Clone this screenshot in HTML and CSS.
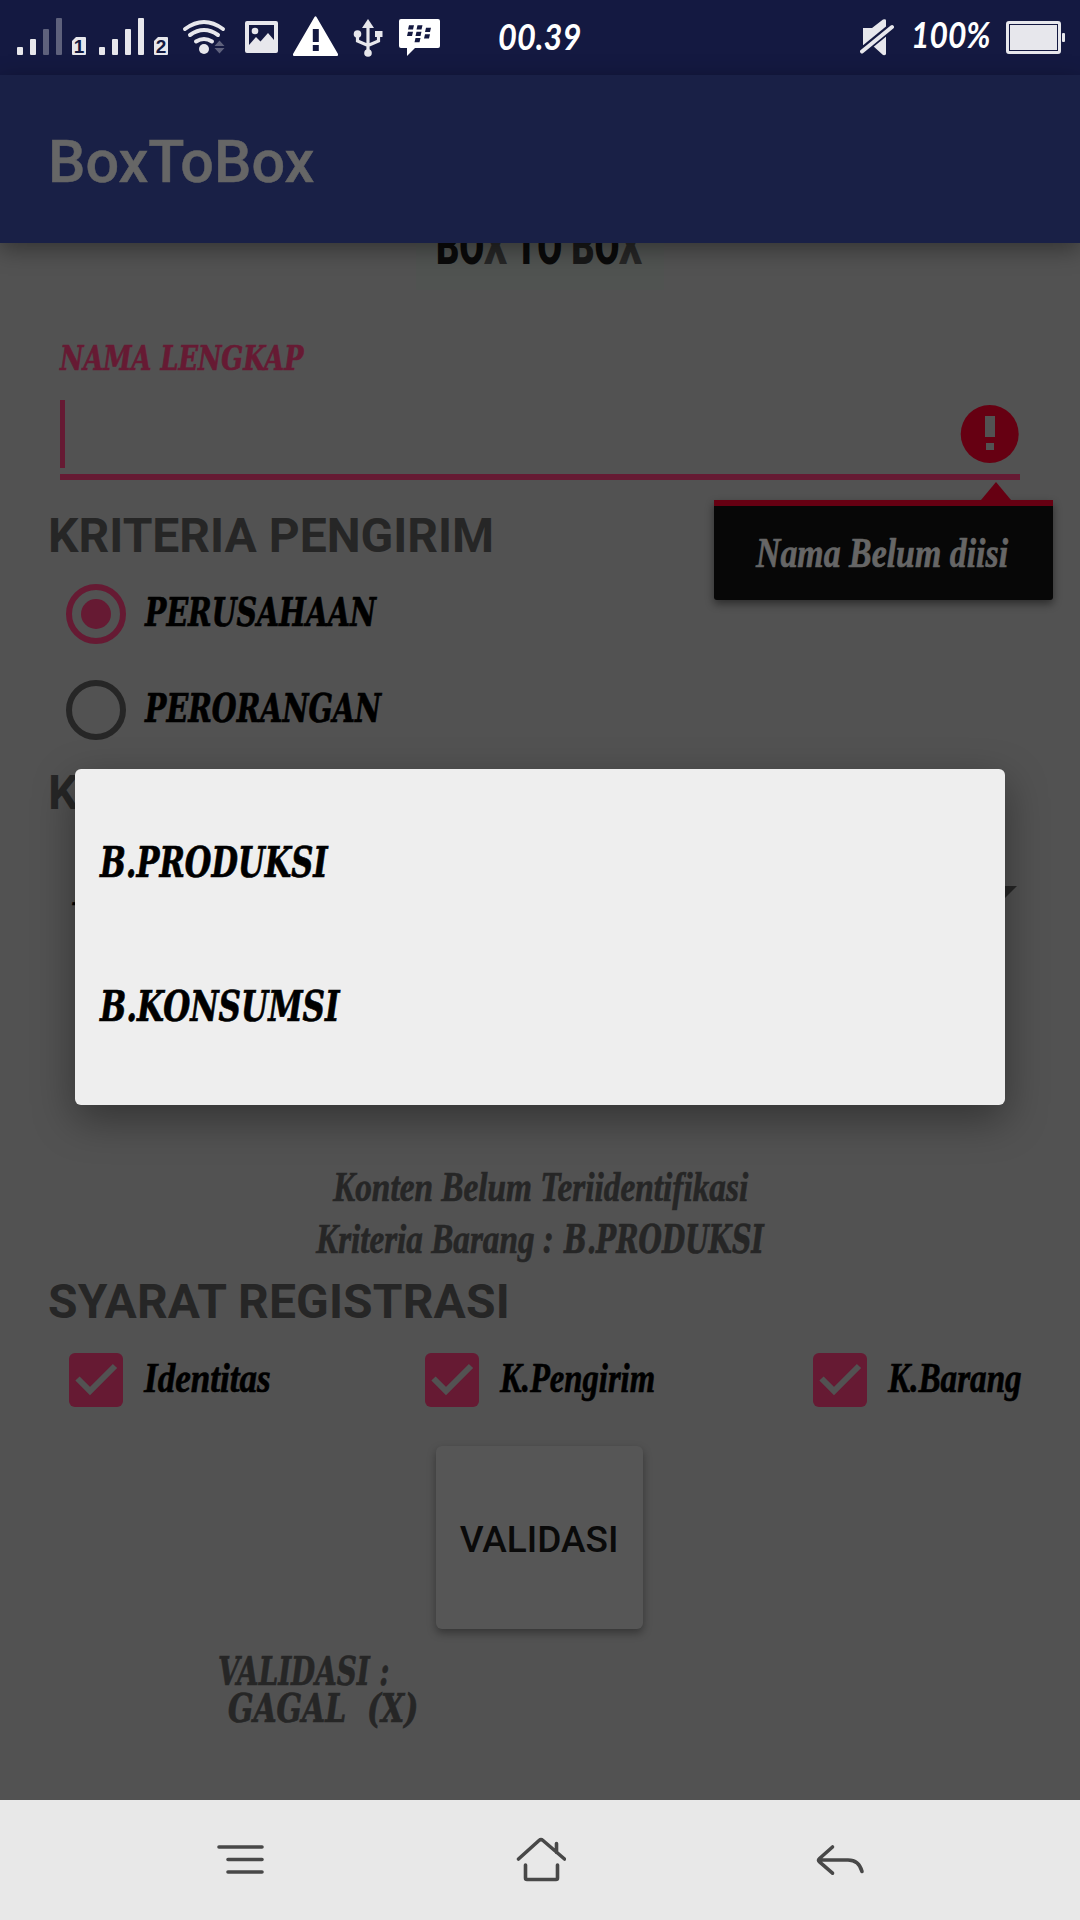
FILE: index.html
```html
<!DOCTYPE html>
<html lang="id">
<head>
<meta charset="utf-8">
<title>BoxToBox</title>
<link rel="stylesheet" href="styles.css">
</head>
<body>
<div class="screen">
  <header class="status">
    <svg class="status-icons" width="460" height="75" viewBox="0 0 460 75" fill="#e7e7ec">
      <!-- signal, SIM 1 -->
      <g>
        <rect x="17" y="47" width="6" height="8" rx="1"/>
        <rect x="30" y="39" width="6" height="16" rx="1"/>
        <rect x="43" y="29" width="6" height="26" rx="1" opacity=".35"/>
        <rect x="56" y="18" width="6" height="37" rx="1" opacity=".35"/>
        <path d="M76 37h9a1 1 0 0 1 1 1v16a1 1 0 0 1-1 1H73a1 1 0 0 1-1-1V41z"/>
      </g>
      <!-- signal, SIM 2 -->
      <g>
        <rect x="99" y="47" width="6" height="8" rx="1"/>
        <rect x="112" y="39" width="6" height="16" rx="1"/>
        <rect x="125" y="29" width="6" height="26" rx="1"/>
        <rect x="138" y="18" width="6" height="37" rx="1"/>
        <path d="M158 37h9a1 1 0 0 1 1 1v16a1 1 0 0 1-1 1h-12a1 1 0 0 1-1-1V41z"/>
      </g>
      <g class="sim" fill="#141941" text-anchor="middle"><text x="79" y="53">1</text><text x="161" y="53">2</text></g>
      <!-- wifi -->
      <g fill="none" stroke="#e7e7ec" stroke-width="4" stroke-linecap="round">
        <path d="M185 29q19-14 38 0M190 35q14-10 28 0M196 41.500q8-5 16 0"/>
      </g>
      <circle cx="204" cy="49" r="5"/>
      <path d="M214.500 46l5-5.500 5 5.500zM214.500 48l5 5.500 5-5.500z" opacity=".35"/>
      <!-- picture -->
      <path fill-rule="evenodd" d="M247 21h29a2 2 0 0 1 2 2v28a2 2 0 0 1-2 2h-29a2 2 0 0 1-2-2V23a2 2 0 0 1 2-2zM249 25v20l7-8 4.500 4.500L268 33l6 7V25z"/>
      <circle cx="255" cy="31" r="3.300"/>
      <!-- warning -->
      <path fill="#fff" fill-rule="evenodd" d="M314.500 17q1-1.500 2 0L338 54q.5 2-1 2H294q-1.500 0-1-2zM312.800 29v13h6V29zM312.800 45v6h6v-6z"/>
      <!-- usb -->
      <path d="M368 19l6 9h-12z"/>
      <circle cx="357.500" cy="34" r="3.800"/><circle cx="368" cy="53" r="3.800"/><rect x="375" y="31" width="7.500" height="6"/>
      <path d="M368 26v27M357.500 34v7l10.500 4.500L378.500 41v-7" fill="none" stroke="#e7e7ec" stroke-width="3.200"/>
      <!-- messenger -->
      <path fill="#fff" d="M401 19h37a2 2 0 0 1 2 2v25a2 2 0 0 1-2 2h-23l-8 8v-8h-6a2 2 0 0 1-2-2V21a2 2 0 0 1 2-2z"/>
      <g fill="#141941">
        <path d="M409 25.200h5l-1 4.300h-5zM417.500 25.200h5l-1 4.300h-5zM408 31.700h5l-1 4.300h-5zM416.500 31.700h5l-1 4.300h-5zM426 27.700h5l-1 4.300h-5zM425 34.200h5l-1 4.300h-5zM415.500 38h5l-1 4.300h-5z"/>
      </g>
    </svg>
    <span class="num clock">00.39</span>
    <svg class="mute" width="36" height="75" viewBox="0 0 36 75">
      <path d="M3 28h9l11-8.500q3-1 3 1V54q0 1.500-3 1L12 45H3z" fill="#e7e7ec"/>
      <path d="M1 52L34 25" stroke="#141941" stroke-width="8"/>
      <path d="M2 51.500L32 27" stroke="#e7e7ec" stroke-width="4" stroke-linecap="round"/>
    </svg>
    <span class="num percent">100%</span>
    <svg class="battery" width="60" height="75" viewBox="0 0 60 75">
      <rect x="1.500" y="22.500" width="52" height="30" rx="1.500" fill="none" stroke="#e7e7ec" stroke-width="3"/>
      <rect x="4" y="25" width="47" height="25" fill="#e7e7ec"/>
      <rect x="56" y="33" width="3" height="9" rx="1" fill="#e7e7ec"/>
    </svg>
  </header>

  <header class="appbar"><h1 class="fit app-title">BoxToBox</h1></header>

  <main class="content">
    <div class="logo"><span class="fit logo-text">BO<i>X</i> TO <b>B</b>O<i>X</i></span></div>

    <label class="field-label"><span class="fit caps name">NAMA LENGKAP</span></label>
    <div class="field">
      <span class="cursor"></span>
      <svg class="error" width="60" height="60" viewBox="0 0 60 60">
        <circle cx="29.700" cy="30" r="29" fill="#660012"/>
        <path d="M25 12h10v21H25zM26 39h8v7h-8z" fill="#525252"/>
      </svg>
    </div>

    <h2>KRITERIA PENGIRIM</h2>
    <div class="radio">
      <svg width="60" height="62" viewBox="0 0 60 62"><circle cx="30" cy="31" r="27" fill="none" stroke="#661a33" stroke-width="6"/><circle cx="30" cy="31" r="15" fill="#661a33"/></svg>
      <span class="fit caps perusahaan">PERUSAHAAN</span>
    </div>
    <div class="radio">
      <svg width="60" height="62" viewBox="0 0 60 62"><circle cx="30" cy="31" r="27" fill="none" stroke="#262626" stroke-width="6"/></svg>
      <span class="fit caps perorangan">PERORANGAN</span>
    </div>

    <h2 class="goods">KRITERIA BARANG</h2>
    <div class="spinner">
      <span class="fit caps selected">B.PRODUKSI</span>
      <svg width="30" height="15" viewBox="0 0 30 15"><path d="M0 0h30L15 15z" fill="#262626"/></svg>
    </div>

    <div class="info"><span class="fit script konten">Konten Belum Teriidentifikasi</span></div>
    <div class="info"><span class="fit script kriteria">Kriteria Barang :</span><span class="fit caps barang">B.PRODUKSI</span></div>

    <h2 class="terms">SYARAT REGISTRASI</h2>
    <div class="checks">
      <div class="check">
        <svg width="54" height="54" viewBox="0 0 54 54"><rect width="54" height="54" rx="6" fill="#661a33"/><path d="M8.500 25.500L21 38 46 13" fill="none" stroke="#525252" stroke-width="6"/></svg>
        <span class="fit script identitas">Identitas</span>
      </div>
      <div class="check second">
        <svg width="54" height="54" viewBox="0 0 54 54"><rect width="54" height="54" rx="6" fill="#661a33"/><path d="M8.500 25.500L21 38 46 13" fill="none" stroke="#525252" stroke-width="6"/></svg>
        <span class="fit script pengirim">K.Pengirim</span>
      </div>
      <div class="check">
        <svg width="54" height="54" viewBox="0 0 54 54"><rect width="54" height="54" rx="6" fill="#661a33"/><path d="M8.500 25.500L21 38 46 13" fill="none" stroke="#525252" stroke-width="6"/></svg>
        <span class="fit script kbarang">K.Barang</span>
      </div>
    </div>

    <button class="validate">VALIDASI</button>
    <div class="result">
      <span class="fit caps res1">VALIDASI :</span>
      <span class="fit caps res2">GAGAL&nbsp; (X)</span>
    </div>

    <div class="tooltip"><span class="fit script tip">Nama Belum diisi</span></div>
  </main>

  <nav class="navbar">
    <svg width="50" height="60" viewBox="0 0 50 60"><path d="M3 17h43M12 29.500h34M12 42h34"/></svg>
    <svg width="50" height="60" viewBox="0 0 50 60"><path d="M2.500 29L23 10.500q2-1.700 4 0L48.500 29M40.500 13.500v9M9.500 35v13q0 1.500 1.500 1.500h29q1.500 0 1.500-1.500V35"/></svg>
    <svg width="50" height="60" viewBox="0 0 50 60"><path d="M17.500 17L4.500 28.500q-2 1.700 0 3.400l13 11.300M5 30h28q11 0 14 11.500"/></svg>
  </nav>

  <div class="dialog">
    <div class="option"><span class="fit caps opt1">B.PRODUKSI</span></div>
    <div class="option"><span class="fit caps opt2">B.KONSUMSI</span></div>
  </div>
</div>
</body>
</html>
```
FILE: styles.css
```css
body { margin: 0; }
* { box-sizing: border-box; }

.screen {
  position: relative;
  display: flex;
  flex-direction: column;
  width: 1080px;
  height: 1920px;
  overflow: hidden;
  background: #525252;
  font-family: Roboto, sans-serif;
}

/* condensed text: the box has the drawn width, the glyphs are squeezed into it */
.fit {
  display: block;
  flex: none;
  white-space: nowrap;
  transform: scaleX(var(--sx, 1));
  transform-origin: 0 50%;
}
.caps {
  font-family: "DejaVu Serif Condensed", "DejaVu Serif", serif;
  font-stretch: condensed;
  font-weight: 700;
  font-style: italic;
  font-size: 39px;
  -webkit-text-stroke: .7px;
}
.script {
  font-family: "Liberation Serif", serif;
  font-weight: 700;
  font-style: italic;
  font-size: 42px;
  -webkit-text-stroke: .7px;
}

/* status bar */
.status {
  display: flex;
  flex: none;
  height: 75px;
  background: #141941;
  line-height: 72px;
}
.status svg { display: block; flex: none; }
.num {
  flex: none;
  font-family: Lato, sans-serif;
  font-weight: 700;
  font-style: italic;
  font-size: 37px;
  color: #fff;
  white-space: nowrap;
  transform-origin: 0 50%;
}
.clock { width: 84px; margin-left: 38px; transform: scaleX(.88); }
.mute { margin-left: 278px; }
.percent { width: 78px; margin-left: 15px; line-height: 67px; transform: scaleX(.86); }
.battery { margin-left: 17px; }
.sim { font: 700 19px "Liberation Sans", sans-serif; }

/* app bar */
.appbar {
  display: flex;
  flex: none;
  z-index: 1;
  height: 168px;
  padding-left: 48px;
  background: #192046;
  box-shadow: 0 6px 22px rgba(0, 0, 0, .38);
}
.app-title {
  --sx: .988;
  margin: 0;
  font-size: 60px;
  font-weight: 500;
  line-height: 173px;
  color: #666;
  -webkit-text-stroke: .5px;
}

.content {
  position: relative;
  display: flex;
  flex-direction: column;
  flex: none;
  height: 1557px;
  padding: 0 48px;
  color: #262626;
}
.logo {
  align-self: center;
  width: 248px;
  height: 47px;
  padding-left: 20px;
  overflow: hidden;
  background: #505351;
}
.logo-text {
  --sx: .695;
  width: 205px;
  margin-top: -29px;
  font-size: 52px;
  font-weight: 900;
  line-height: 66px;
  color: #0a0a0a;
}
.logo-text i { font-style: normal; color: #262626; }
.logo-text b { font-weight: 900; color: #181818; }

.field-label {
  margin: 48px 0 0 12px;
  line-height: 40px;
  color: #661a33;
}
.name { --sx: .837; width: 245px; font-size: 34px; }
.field {
  display: flex;
  justify-content: space-between;
  height: 80px;
  margin: 22px 12px 0;
  border-bottom: 6px solid #661a33;
}
.cursor { width: 5px; height: 68px; background: #661a33; }
.error { margin-top: 4px; }

h2 {
  margin: 28px 0 2px;
  font-size: 48px;
  font-weight: 700;
  line-height: 56px;
  white-space: nowrap;
}
.radio {
  display: flex;
  align-items: center;
  gap: 19px;
  height: 96px;
  padding-left: 18px;
}
.radio .fit { margin-bottom: 5px; color: #000; line-height: 50px; }
.perusahaan { --sx: .81; width: 231px; }
.perorangan { --sx: .812; width: 236px; }

.goods { margin-top: 7px; }
.spinner {
  display: flex;
  justify-content: space-between;
  height: 88px;
  margin: 26px 15px 0 25px;
  line-height: 84px;
}
.spinner svg { margin-top: 37px; }
.selected { --sx: .8; width: 230px; color: #000; }

.info {
  display: flex;
  flex: none;
  justify-content: center;
  gap: 10px;
  line-height: 52px;
}
.spinner + .info { margin-top: 224px; }
.konten { --sx: .793; width: 415px; }
.kriteria { --sx: .79; width: 238px; }
.barang { --sx: .765; width: 200px; }

.terms { margin-top: 9px; letter-spacing: .15px; }
.checks {
  display: flex;
  justify-content: space-between;
  height: 96px;
  padding: 0 10px 0 21px;
}
.check { display: flex; align-items: center; gap: 21px; }
.check .fit { margin-bottom: 4px; color: #000; line-height: 50px; }
.check.second { margin-right: 4px; }
.identitas { --sx: .835; width: 127px; }
.pengirim { --sx: .777; width: 155px; }
.kbarang { --sx: .79; width: 134px; }
.checks svg { flex: none; }

.validate {
  align-self: center;
  flex: none;
  width: 207px;
  height: 183px;
  margin: 18px 2px 0 0;
  padding: 4px 0 0;
  border: 0;
  border-radius: 6px;
  background: #565656;
  box-shadow: 0 4px 8px rgba(0, 0, 0, .35);
  font: 500 37px/44px Roboto, sans-serif;
  color: #0a0a0a;
}
.result {
  padding-left: 170px;
  margin-top: 24px;
  line-height: 37px;
}
.res1 { --sx: .79; width: 171px; }
.res2 { --sx: .85; width: 190px; margin-left: 10px; }

/* validation message hanging below the field */
.tooltip {
  position: absolute;
  top: 257px;
  left: 714px;
  width: 339px;
  height: 100px;
  padding-left: 42px;
  border-top: 6px solid #660012;
  border-radius: 0 0 3px 3px;
  background: #070707;
  box-shadow: 0 4px 9px rgba(0, 0, 0, .45);
  line-height: 95px;
  color: #666;
}
.tooltip::before {
  content: "";
  position: absolute;
  top: -24px;
  left: 267px;
  border: 15px solid transparent;
  border-top-width: 0;
  border-bottom: 18px solid #660012;
}
.tip { --sx: .806; width: 252px; }

.navbar {
  display: flex;
  flex: none;
  justify-content: space-between;
  height: 120px;
  padding: 30px 215px 0 216px;
  background: #e8e8e8;
}
.navbar svg {
  fill: none;
  stroke: #484848;
  stroke-width: 3.6px;
  stroke-linecap: round;
}

/* dropdown of the spinner */
.dialog {
  position: absolute;
  z-index: 2;
  top: 769px;
  left: 75px;
  width: 930px;
  height: 336px;
  padding: 24px 25px;
  border-radius: 6px;
  background: #eee;
  box-shadow: 0 14px 42px rgba(0, 0, 0, .38);
  color: #000;
}
.option { height: 144px; line-height: 138px; }
.option .fit { font-size: 43px; }
.opt1 { --sx: .79; width: 228px; }
.opt2 { --sx: .803; width: 240px; }
```
